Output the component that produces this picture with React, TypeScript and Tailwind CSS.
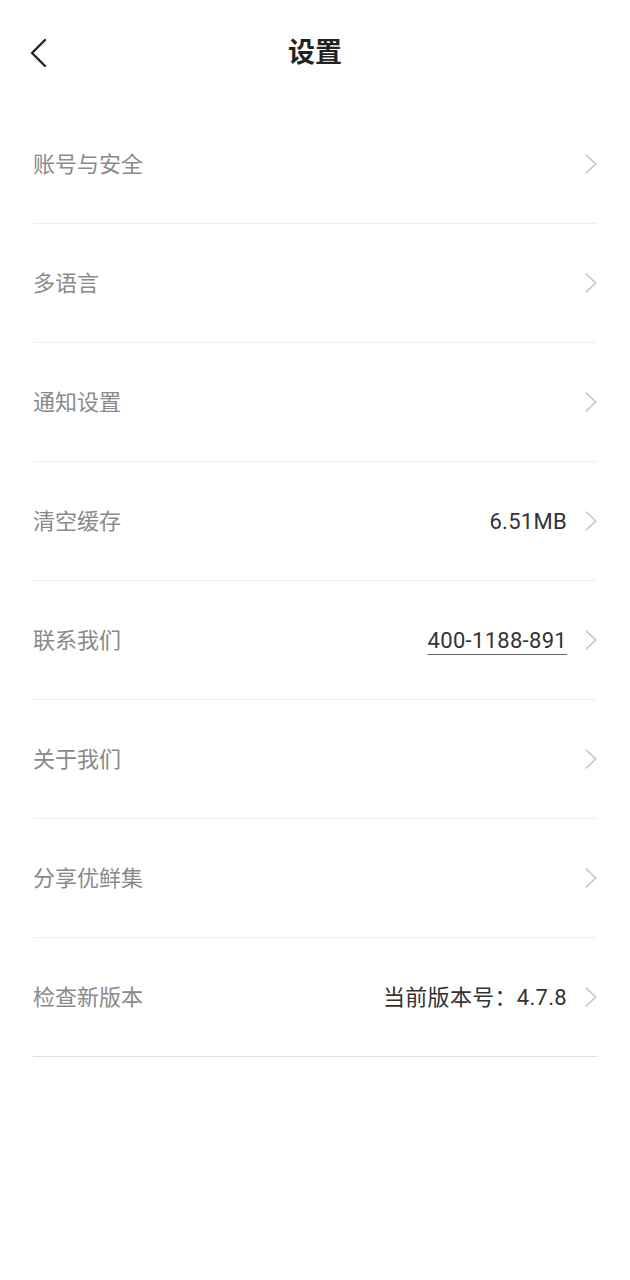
const rows: { label: string; value?: string; link?: boolean }[] = [
  { label: "账号与安全" },
  { label: "多语言" },
  { label: "通知设置" },
  { label: "清空缓存", value: "6.51MB" },
  { label: "联系我们", value: "400-1188-891", link: true },
  { label: "关于我们" },
  { label: "分享优鲜集" },
  { label: "检查新版本", value: "当前版本号：4.7.8" },
];

function Chevron() {
  return (
    <svg width="12" height="20" viewBox="0 0 12 20" fill="none" className="shrink-0">
      <path d="M1.2 1 L10.8 10 L1.2 19" stroke="#c2c2c2" strokeWidth="1.5" strokeLinecap="round" strokeLinejoin="round" />
    </svg>
  );
}

export default function App() {
  return (
    <div
      className="w-[630px] min-h-[1280px] bg-white"
      style={{ fontFamily: 'Roboto, "Noto Sans CJK SC", sans-serif' }}
    >
      <header className="relative h-[105px] flex items-start justify-center">
        <button className="absolute left-[28px] top-[38px] p-0">
          <svg width="20" height="30" viewBox="0 0 20 30" fill="none">
            <path d="M17 2 L4 15 L17 28" stroke="#222" strokeWidth="2.4" strokeLinecap="round" strokeLinejoin="round" />
          </svg>
        </button>
        <h1 className="mt-[34px] text-[27px] leading-[38px] font-bold text-[#222]">设置</h1>
      </header>

      <ul className="mx-[33px]">
        {rows.map((r, i) => (
          <li
            key={r.label}
            className={`h-[119px] flex items-center justify-between border-b ${
              i === rows.length - 1 ? "border-[#dedede]" : "border-[#eeeeee]"
            }`}
          >
            <span className="text-[22px] text-[#8a8a8a]">{r.label}</span>
            <div className="flex items-center gap-[18px]">
              {r.value && (
                <span
                  className={`text-[22px] tracking-[0.3px] text-[#333] ${
                    r.link ? "underline underline-offset-[6px] decoration-[1px] decoration-[#666]" : ""
                  }`}
                >
                  {r.value}
                </span>
              )}
              <Chevron />
            </div>
          </li>
        ))}
      </ul>
    </div>
  );
}
